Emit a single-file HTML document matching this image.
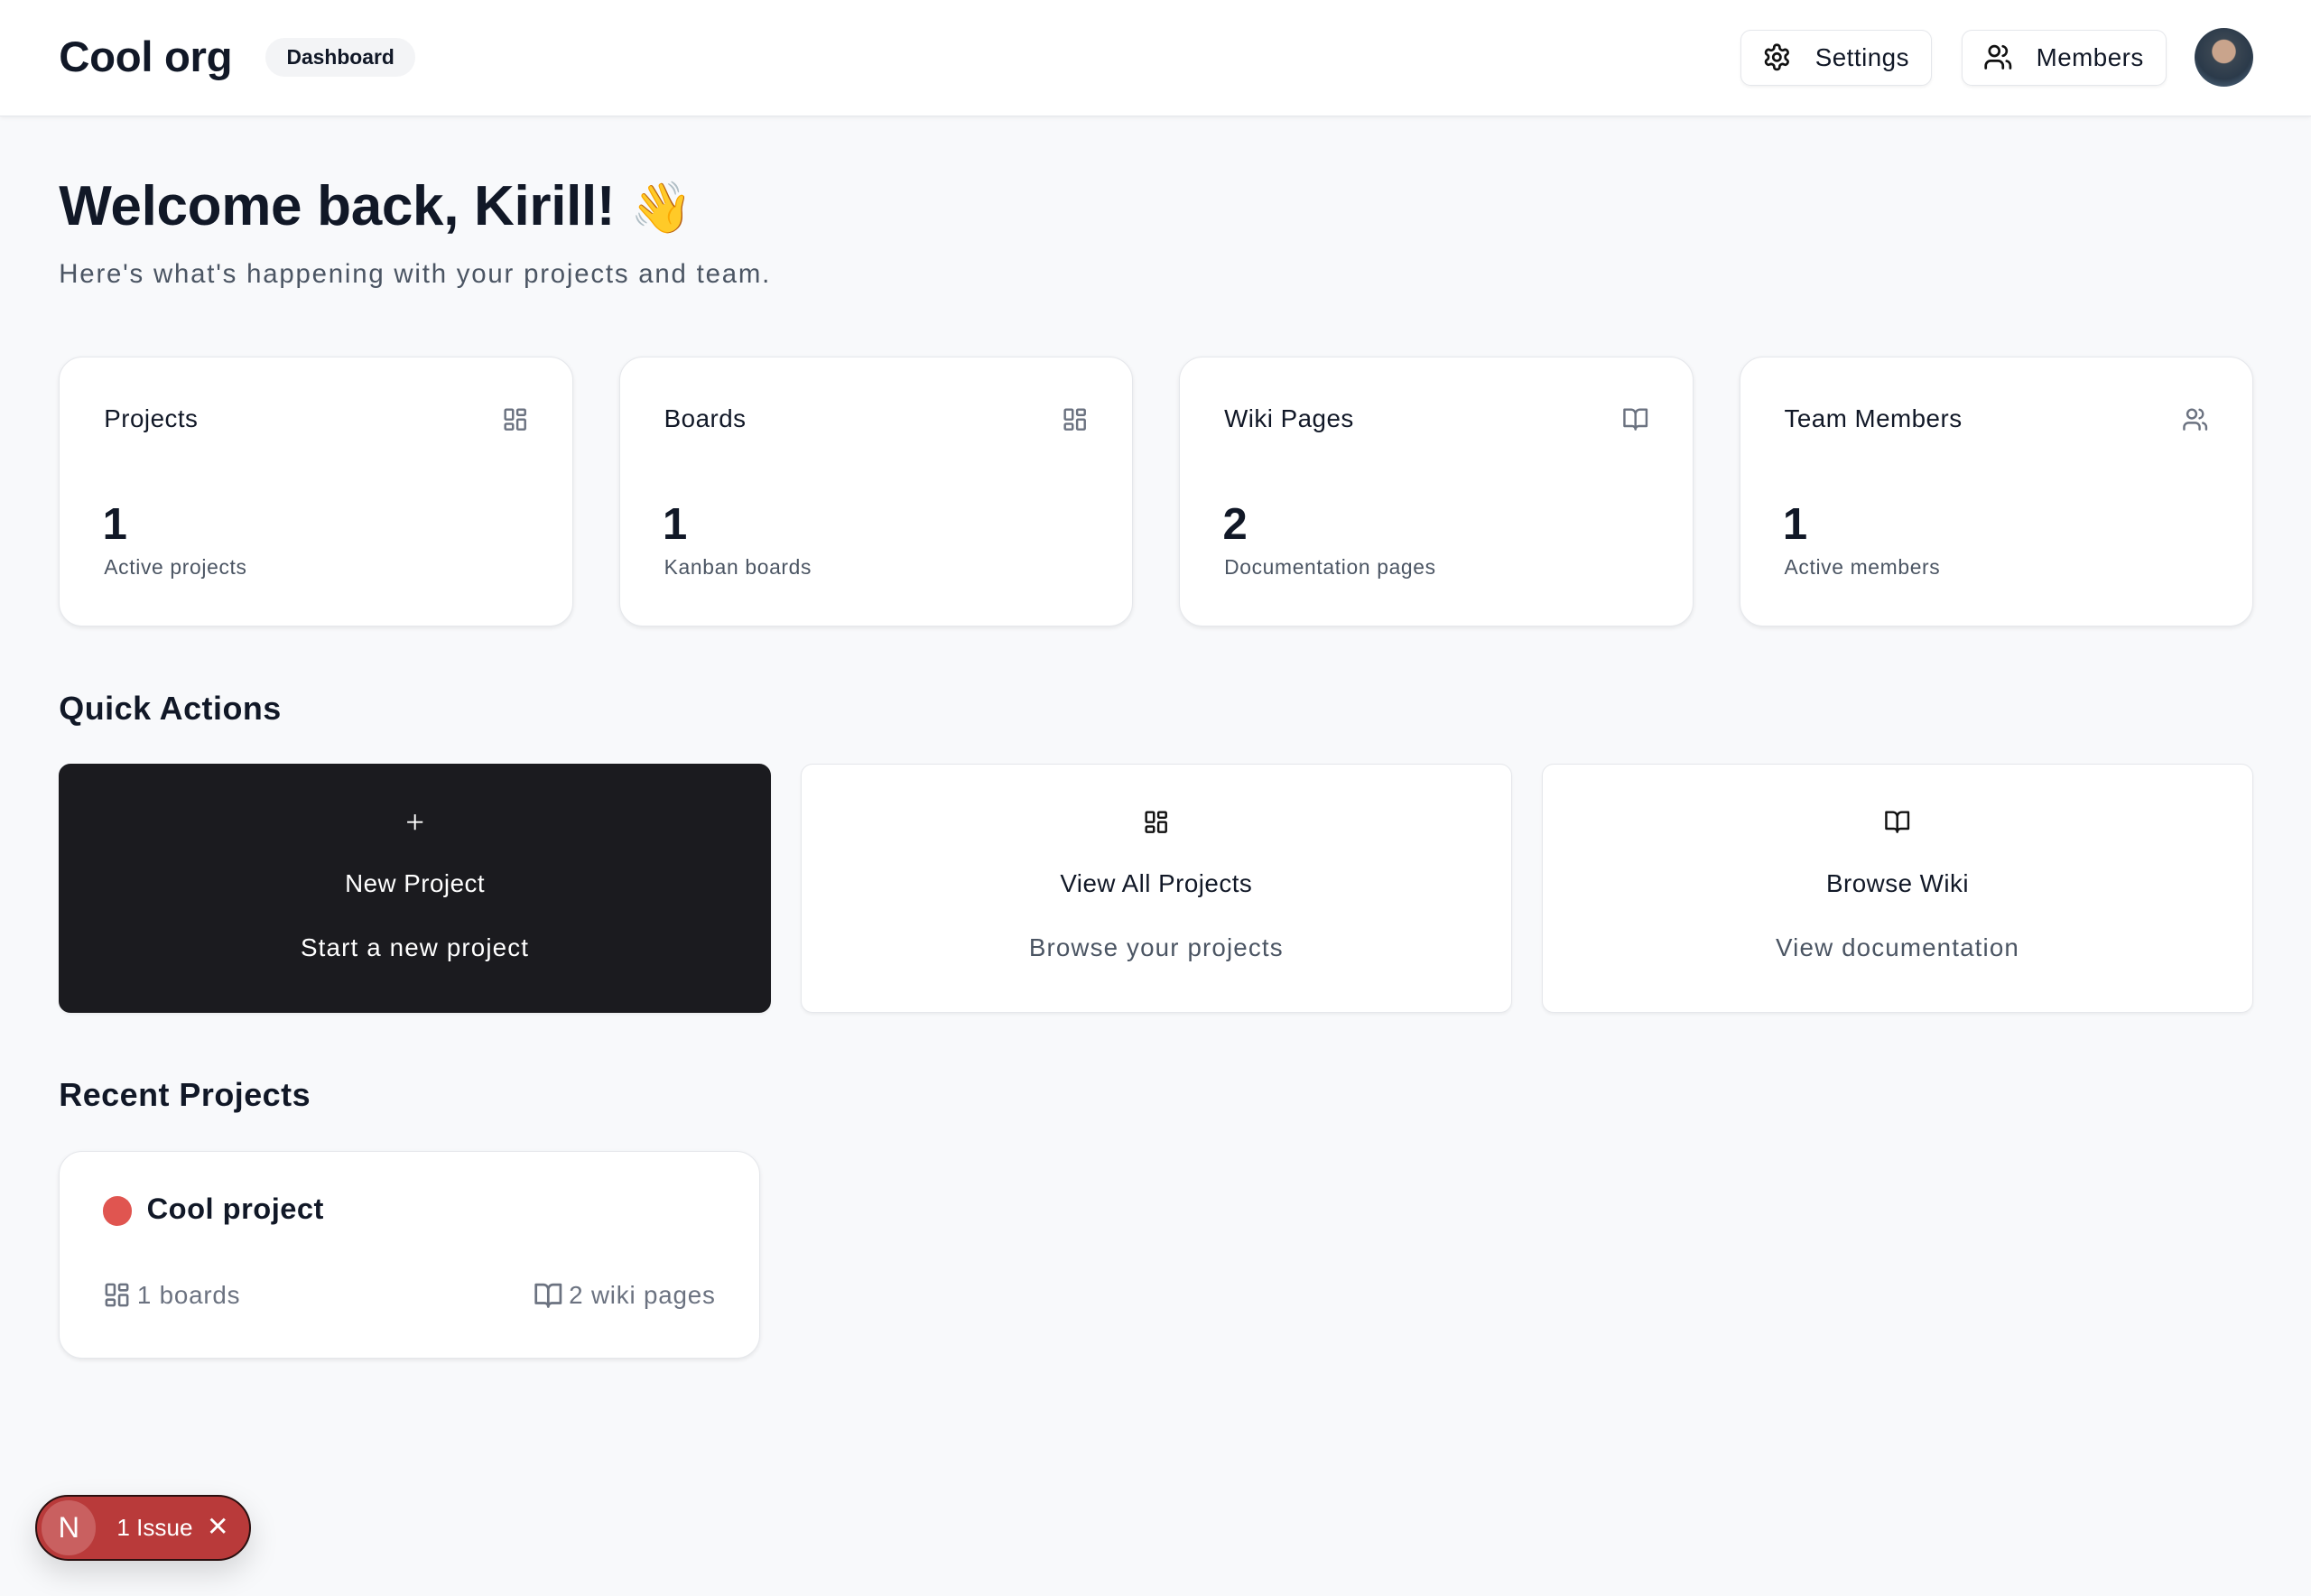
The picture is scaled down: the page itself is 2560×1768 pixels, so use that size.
<!DOCTYPE html>
<html><head><meta charset="utf-8"><style>
html{zoom:1.63265}
*{box-sizing:border-box;margin:0;padding:0}
body{width:1568px;height:1083px;background:#f8f9fb;font-family:"Liberation Sans",sans-serif;color:#111827;position:relative;overflow:hidden;letter-spacing:.3px}
.hdr{position:absolute;left:0;top:0;width:1568px;height:79px;background:#fff;border-bottom:1px solid #e5e7eb;box-shadow:0 1px 3px rgba(0,0,0,.06)}
.logo{position:absolute;left:40px;top:22px;font-size:29px;font-weight:700;letter-spacing:-.2px}
.pill{position:absolute;left:180px;top:26px;width:102px;height:26px;border-radius:13px;background:#f3f4f6;font-size:14px;font-weight:700;text-align:center;line-height:26px;letter-spacing:0}
.btn{position:absolute;top:20px;height:38px;border:1px solid #e5e7eb;border-radius:7px;background:#fff;box-shadow:0 1px 2px rgba(0,0,0,.05);font-size:17px;font-weight:500;display:flex;align-items:center;gap:16px;padding-left:14px}
.av{position:absolute;left:1489px;top:19px;width:40px;height:40px;border-radius:50%;background:radial-gradient(circle at 50% 40%,#c9a48c 0 25%,#3a4652 27%,#2b3a4a 60%,#5d7a95)}
h1{position:absolute;left:40px;top:118px;font-size:38px;font-weight:700;letter-spacing:-.2px}
.sub{position:absolute;left:40px;top:176px;font-size:18px;color:#4b5563;letter-spacing:1.1px}
.card{position:absolute;background:#fff;border:1px solid #e5e7eb;border-radius:16px;box-shadow:0 1px 3px rgba(0,0,0,.08)}
.st{top:242px;width:349px;height:183px}
.st .t{position:absolute;left:30px;top:32px;font-size:17px;font-weight:500}
.st .i{position:absolute;right:30px;top:33px}
.st .n{position:absolute;left:29px;top:96px;font-size:30px;font-weight:700}
.st .s{position:absolute;left:30px;top:134px;font-size:14px;color:#4b5563;letter-spacing:.4px}
h2{position:absolute;left:40px;font-size:22px;font-weight:700}
.qa{position:absolute;top:518px;width:483px;height:169px;border-radius:8px;background:#fff;border:1px solid #e5e7eb;text-align:center;box-shadow:0 1px 2px rgba(0,0,0,.05)}
.qa .ic{position:absolute;left:0;right:0;top:30px;display:flex;justify-content:center}
.qa .a{position:absolute;left:0;right:0;top:71px;font-size:17px;font-weight:500}
.qa .b{position:absolute;left:0;right:0;top:115px;font-size:17px;color:#4b5563;letter-spacing:.7px}
.qa.dk{background:#1b1b1f;border-color:#1b1b1f;color:#fff}
.qa.dk .b{color:#fff}
.ms{position:absolute;top:869px;font-size:17px;color:#6b7280;display:flex;align-items:center;gap:4px;letter-spacing:.5px}
.iss{position:absolute;left:24px;top:1014px;width:146px;height:45px;border-radius:23px;background:#b93a3a;border:1.5px solid #2a1010;box-shadow:0 8px 20px rgba(0,0,0,.15);color:#fff;letter-spacing:0}
.iss .nn{position:absolute;left:3px;top:3px;width:37px;height:37px;border-radius:50%;background:#c96060;font-size:20px;text-align:center;line-height:37px}
</style></head><body>
<div class="hdr">
<div class="logo">Cool org</div>
<div class="pill">Dashboard</div>
<div class="btn" style="left:1181px;width:130px"><svg width="20" height="20" viewBox="0 0 24 24" fill="none" stroke="#111" stroke-width="2" stroke-linecap="round" stroke-linejoin="round"><path d="M12.22 2h-.44a2 2 0 0 0-2 2v.18a2 2 0 0 1-1 1.730l-.43.25a2 2 0 0 1-2 0l-.15-.08a2 2 0 0 0-2.73.73l-.22.38a2 2 0 0 0 .73 2.730l.15.1a2 2 0 0 1 1 1.72v.51a2 2 0 0 1-1 1.74l-.15.09a2 2 0 0 0-.73 2.73l.22.38a2 2 0 0 0 2.73.73l.15-.08a2 2 0 0 1 2 0l.43.25a2 2 0 0 1 1 1.73V20a2 2 0 0 0 2 2h.44a2 2 0 0 0 2-2v-.18a2 2 0 0 1 1-1.73l.43-.25a2 2 0 0 1 2 0l.15.08a2 2 0 0 0 2.73-.73l.22-.39a2 2 0 0 0-.73-2.73l-.15-.08a2 2 0 0 1-1-1.74v-.5a2 2 0 0 1 1-1.74l.15-.09a2 2 0 0 0 .73-2.73l-.22-.38a2 2 0 0 0-2.73-.73l-.15.08a2 2 0 0 1-2 0l-.43-.25a2 2 0 0 1-1-1.73V4a2 2 0 0 0-2-2z"/><circle cx="12" cy="12" r="3"/></svg>Settings</div>
<div class="btn" style="left:1331px;width:139px"><svg width="20" height="20" viewBox="0 0 24 24" fill="none" stroke="#111" stroke-width="2" stroke-linecap="round"><path d="M16 21v-2a4 4 0 0 0-4-4H6a4 4 0 0 0-4 4v2"/><circle cx="9" cy="7" r="4"/><path d="M22 21v-2a4 4 0 0 0-3-3.87M16 3.13a4 4 0 0 1 0 7.75"/></svg>Members</div>
<div class="av"></div>
</div>
<h1>Welcome back, Kirill! <span style="font-size:34px">👋</span></h1>
<div class="sub">Here's what's happening with your projects and team.</div>

<svg width="0" height="0" style="position:absolute"><defs>
<g id="grid" fill="none" stroke="currentColor" stroke-width="2"><rect x="3" y="3" width="7" height="9" rx="1"/><rect x="14" y="3" width="7" height="5" rx="1"/><rect x="14" y="12" width="7" height="9" rx="1"/><rect x="3" y="16" width="7" height="5" rx="1"/></g>
<g id="book" fill="none" stroke="currentColor" stroke-width="2" stroke-linejoin="round"><path d="M2 3h6a4 4 0 0 1 4 4v14a3 3 0 0 0-3-3H2zM22 3h-6a4 4 0 0 0-4 4v14a3 3 0 0 1 3-3h7z"/></g>
<g id="users" fill="none" stroke="currentColor" stroke-width="2" stroke-linecap="round"><path d="M16 21v-2a4 4 0 0 0-4-4H6a4 4 0 0 0-4 4v2"/><circle cx="9" cy="7" r="4"/><path d="M22 21v-2a4 4 0 0 0-3-3.87M16 3.13a4 4 0 0 1 0 7.75"/></g>
</defs></svg>

<div class="card st" style="left:40px"><div class="t">Projects</div><svg class="i" width="18" height="18" viewBox="0 0 24 24" style="color:#6b7280"><use href="#grid"/></svg><div class="n">1</div><div class="s">Active projects</div></div>
<div class="card st" style="left:420px"><div class="t">Boards</div><svg class="i" width="18" height="18" viewBox="0 0 24 24" style="color:#6b7280"><use href="#grid"/></svg><div class="n">1</div><div class="s">Kanban boards</div></div>
<div class="card st" style="left:800px"><div class="t">Wiki Pages</div><svg class="i" width="18" height="18" viewBox="0 0 24 24" style="color:#6b7280"><use href="#book"/></svg><div class="n">2</div><div class="s">Documentation pages</div></div>
<div class="card st" style="left:1180px"><div class="t">Team Members</div><svg class="i" width="18" height="18" viewBox="0 0 24 24" style="color:#6b7280"><use href="#users"/></svg><div class="n">1</div><div class="s">Active members</div></div>

<h2 style="top:468px">Quick Actions</h2>
<div class="qa dk" style="left:40px"><div class="ic"><svg width="18" height="18" viewBox="0 0 24 24" stroke="#fff" stroke-width="1.6" fill="none"><path d="M12 5v14M5 12h14"/></svg></div><div class="a">New Project</div><div class="b">Start a new project</div></div>
<div class="qa" style="left:543px"><div class="ic"><svg width="18" height="18" viewBox="0 0 24 24" style="color:#111"><use href="#grid"/></svg></div><div class="a">View All Projects</div><div class="b">Browse your projects</div></div>
<div class="qa" style="left:1046px"><div class="ic"><svg width="18" height="18" viewBox="0 0 24 24" style="color:#111"><use href="#book"/></svg></div><div class="a">Browse Wiki</div><div class="b">View documentation</div></div>

<h2 style="top:730px">Recent Projects</h2>
<div class="card" style="left:40px;top:781px;width:476px;height:141px">
<div style="position:absolute;left:29px;top:30px;width:20px;height:20px;border-radius:50%;background:#e05550"></div>
<div style="position:absolute;left:59px;top:27px;font-size:20px;font-weight:700">Cool project</div>
</div>
<div class="ms" style="left:70px"><svg width="19" height="19" viewBox="0 0 24 24"><use href="#grid"/></svg>1 boards</div>
<div class="ms" style="left:362px"><svg width="20" height="20" viewBox="0 0 24 24"><use href="#book"/></svg>2 wiki pages</div>

<div class="iss"><div class="nn">N</div><div style="position:absolute;left:54px;top:12px;font-size:16px">1 Issue</div><div style="position:absolute;left:115px;top:10px;font-size:18px">✕</div></div>
</body></html>
